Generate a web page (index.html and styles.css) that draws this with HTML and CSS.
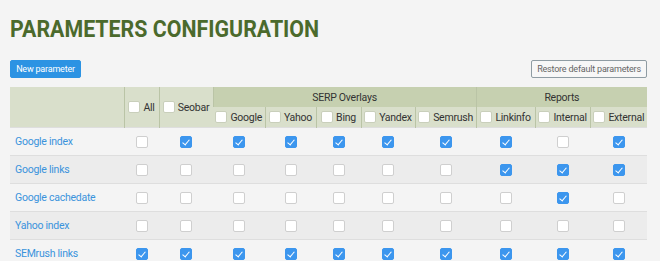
FILE: index.html
```html
<!DOCTYPE html>
<html lang="en">
<head>
    <meta charset="UTF-8">
    <title>Parameters Configuration</title>
    <link rel="stylesheet" href="styles.css">
</head>
<body>
<h1><span>Parameters Configuration</span></h1>

<div class="toolbar">
    <button class="btn btn-primary">New parameter</button>
    <button class="btn btn-default">Restore default parameters</button>
</div>

<table class="params">
    <colgroup>
        <col style="width: 114px">
        <col style="width: 35px">
        <col style="width: 54px">
        <col style="width: 52px">
        <col style="width: 51px">
        <col style="width: 45px">
        <col style="width: 54px">
        <col style="width: 61px">
        <col style="width: 59px">
        <col style="width: 55px">
        <col style="width: 57px">
    </colgroup>
    <thead>
        <tr>
            <th rowspan="2" class="side"></th>
            <th rowspan="2" class="side"><span class="cb"></span>All</th>
            <th rowspan="2" class="side"><span class="cb"></span>Seobar</th>
            <th colspan="5" class="group">SERP Overlays</th>
            <th colspan="3" class="group">Reports</th>
        </tr>
        <tr>
            <th><span class="cb"></span>Google</th>
            <th><span class="cb"></span>Yahoo</th>
            <th><span class="cb"></span>Bing</th>
            <th><span class="cb"></span>Yandex</th>
            <th><span class="cb"></span>Semrush</th>
            <th><span class="cb"></span>Linkinfo</th>
            <th><span class="cb"></span>Internal</th>
            <th><span class="cb"></span>External</th>
        </tr>
    </thead>
    <tbody id="rows"></tbody>
</table>

<script>
    // 1 = checked, in column order: all, seobar, google, yahoo, bing, yandex, semrush, linkinfo, internal, external
    const params = [
        ["Google index",     [0, 1, 1, 1, 1, 1, 1, 1, 0, 1]],
        ["Google links",     [0, 0, 0, 0, 0, 0, 0, 1, 1, 1]],
        ["Google cachedate", [0, 0, 0, 0, 0, 0, 0, 0, 1, 0]],
        ["Yahoo index",      [0, 0, 0, 0, 0, 0, 0, 0, 0, 0]],
        ["SEMrush links",    [1, 1, 1, 1, 1, 1, 1, 1, 1, 1]]
    ];

    const body = document.getElementById("rows");
    for (var i = 0; i < params.length; i++) {
        const tr = document.createElement("tr");
        let html = '<td class="name"><a href="#">' + params[i][0] + '</a></td>';
        for (var j = 0; j < params[i][1].length; j++) {
            html += '<td><span class="cb' + (params[i][1][j] ? ' checked' : '') + '"></span></td>';
        }
        tr.innerHTML = html;
        body.appendChild(tr);
    }
</script>
</body>
</html>
```

FILE: styles.css
```css
body {
    margin: 0;
    padding: 15px 10px 0;
    font-family: Roboto, "Liberation Sans", sans-serif;
    background-color: #f4f4f4;
    color: #333;
}

h1 {
    margin: 0;
    height: 28px;
    font-size: 24px;
    line-height: 28px;
    font-weight: bold;
    text-transform: uppercase;
    color: #4b6a2c;
    white-space: nowrap;
}

h1 span {
    display: inline-block;
    transform: scaleX(0.89);
    transform-origin: left center;
}

.toolbar {
    display: flex;
    justify-content: space-between;
    margin-top: 17px;
    width: 637px;
}

.btn {
    height: 18px;
    padding: 0;
    font-family: Roboto, sans-serif;
    font-size: 9px;
    letter-spacing: -0.2px;
    border-radius: 2px;
    white-space: nowrap;
    cursor: pointer;
}

.btn-primary {
    background-color: #2c93e3;
    border: 1px solid #2c93e3;
    color: white;
    width: 71px;
}

.btn-default {
    background-color: #f7f7f7;
    border: 1px solid #8f9ca3;
    color: #666;
    width: 116px;
}

.params {
    margin-top: 9px;
    width: 637px;
    table-layout: fixed;
    border-collapse: collapse;
    font-size: 10.5px;
    letter-spacing: -0.25px;
}

.params th {
    height: 20px;
    padding: 0;
    font-weight: normal;
    color: #333;
    background-color: #d9dfcb;
    border-left: 1px solid #bac4a6;
    white-space: nowrap;
    text-align: center;
}

.params th:first-child {
    border-left: none;
}

.params th.group {
    background-color: #c6d0b0;
}

.params th .cb {
    border-color: #c9cfbb;
    margin-right: 3px;
    vertical-align: -2px;
}

.params td {
    height: 27px;
    padding: 0;
    text-align: center;
    border-top: 1px solid #dedede;
}

.params tbody tr:nth-child(even) td {
    background-color: #ececec;
}

.params td.name {
    text-align: left;
    padding-left: 5px;
}

.params a {
    color: #3a93dc;
    text-decoration: none;
}

.cb {
    display: inline-block;
    position: relative;
    width: 10px;
    height: 10px;
    background-color: white;
    border: 1px solid #cfcfcf;
    border-radius: 2px;
    vertical-align: middle;
}

.cb.checked {
    background-color: #3c96ee;
    border-color: #3c96ee;
}

.cb.checked::after {
    content: "";
    position: absolute;
    left: 3px;
    top: 1px;
    width: 3px;
    height: 6px;
    border-right: 1px solid white;
    border-bottom: 1px solid white;
    transform: rotate(40deg);
}
```
